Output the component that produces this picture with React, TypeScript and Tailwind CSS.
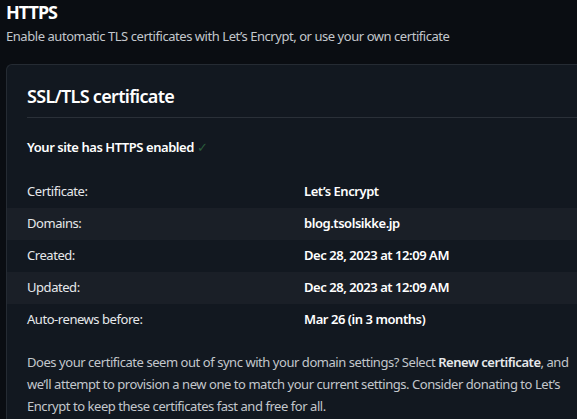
import React from "react";

const rows: { label: string; value: string }[] = [
  { label: "Certificate:", value: "Let’s Encrypt" },
  { label: "Domains:", value: "blog.tsolsikke.jp" },
  { label: "Created:", value: "Dec 28, 2023 at 12:09 AM" },
  { label: "Updated:", value: "Dec 28, 2023 at 12:09 AM" },
  { label: "Auto-renews before:", value: "Mar 26 (in 3 months)" },
];

export default function App() {
  return (
    <div
      className="w-[577px] h-[419px] overflow-hidden bg-[#0a0d12] text-[#e6e8eb] tracking-[-0.45px]"
      style={{ fontFamily: '"Noto Sans", "Open Sans", sans-serif' }}
    >
      <div className="pl-[6px]">
        <h1 className="text-[18px] leading-[24px] font-bold text-white tracking-[-1px]">HTTPS</h1>
        <p className="mt-[3px] text-[13px] leading-[18px] text-[#c3c7cc]">
          Enable automatic TLS certificates with Let’s Encrypt, or use your own certificate
        </p>
      </div>
      <div className="ml-[6px] mt-[19px] w-[600px] rounded-l-[6px] border border-r-0 border-[#252b33] bg-[#121820] pb-[20px]">
        <div className="mx-[20px] border-b border-[#2a3038] pt-[19px] pb-[9px]">
          <h2 className="text-[18px] leading-[24px] font-semibold text-white tracking-[-0.7px]">
            SSL/TLS certificate
          </h2>
        </div>
        <div className="px-[20px] pt-[20px] pb-[20px] text-[13px] leading-[18px] font-semibold text-white">
          Your site has HTTPS enabled <span className="text-[#2b5c3c] font-normal">✓</span>
        </div>
        <div className="text-[13px]">
          {rows.map((r, i) => (
            <div
              key={r.label}
              className={`flex h-[32px] items-center ${i % 2 === 1 ? "bg-[#1a1f27]" : ""}`}
            >
              <div className="w-[297px] pl-[20px] text-[#e6e8eb]">{r.label}</div>
              <div className="font-semibold text-white">{r.value}</div>
            </div>
          ))}
        </div>
        <p className="mt-[15px] px-[20px] w-[590px] text-[13px] leading-[22px] text-[#c3c7cc]">
          Does your certificate seem out of sync with your domain settings? Select{" "}
          <span className="font-semibold text-[#e6e8eb]">Renew certificate</span>, and we’ll attempt to
          provision a new one to match your current settings. Consider donating to Let’s Encrypt to keep
          these certificates fast and free for all.
        </p>
      </div>
    </div>
  );
}
